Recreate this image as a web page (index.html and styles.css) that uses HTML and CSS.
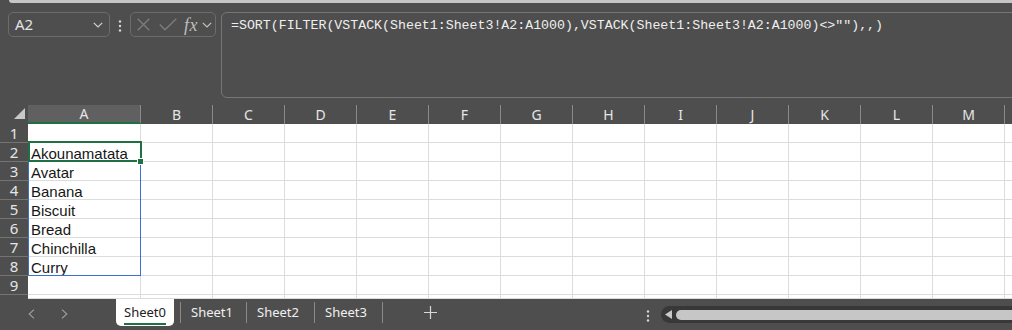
FILE: index.html
```html
<!DOCTYPE html>
<html>
<head>
<meta charset="utf-8">
<title>Sheet</title>
<link rel="stylesheet" href="styles.css">
</head>
<body>
<div class="app">
  <div class="topstrip"></div>
  <div class="fbar">
    <div class="namebox">
      <span class="nb-text">A2</span>
      <svg class="chev" width="10" height="6" viewBox="0 0 10 6"><polyline points="0.8,0.8 5,5 9.2,0.8" fill="none" stroke="#d2d2d2" stroke-width="1.2"/></svg>
    </div>
    <svg class="kebab" width="4" height="12" viewBox="0 0 4 12"><circle cx="2" cy="1.5" r="1.2" fill="#d4d4d4"/><circle cx="2" cy="6" r="1.2" fill="#d4d4d4"/><circle cx="2" cy="10.5" r="1.2" fill="#d4d4d4"/></svg>
    <div class="fxbox">
      <svg class="ic-x" width="13" height="13" viewBox="0 0 13 13"><path d="M0.7 0.7 L12.3 12.3 M12.3 0.7 L0.7 12.3" stroke="#7e7e7e" stroke-width="1.3" fill="none"/></svg>
      <svg class="ic-ok" width="18" height="13" viewBox="0 0 18 13"><polyline points="0.7,6.5 6,11.8 17.3,0.7" fill="none" stroke="#7e7e7e" stroke-width="1.3"/></svg>
      <span class="fx">fx</span>
      <svg class="chev2" width="10" height="6" viewBox="0 0 10 6"><polyline points="0.8,0.8 5,5 9.2,0.8" fill="none" stroke="#c4c4c4" stroke-width="1.2"/></svg>
    </div>
    <div class="formula">=SORT(FILTER(VSTACK(Sheet1:Sheet3!A2:A1000),VSTACK(Sheet1:Sheet3!A2:A1000)&lt;&gt;""),,)</div>
  </div>

  <div class="gridwrap">
    <div class="grid">
      <div class="corner"><span class="tri"></span></div>
      <div class="ch sel">A</div><div class="ch">B</div><div class="ch">C</div><div class="ch">D</div><div class="ch">E</div><div class="ch">F</div><div class="ch">G</div><div class="ch">H</div><div class="ch">I</div><div class="ch">J</div><div class="ch">K</div><div class="ch">L</div><div class="ch">M</div><div class="ch"></div>

      <div class="rh">1</div><div class="c"></div><div class="c"></div><div class="c"></div><div class="c"></div><div class="c"></div><div class="c"></div><div class="c"></div><div class="c"></div><div class="c"></div><div class="c"></div><div class="c"></div><div class="c"></div><div class="c"></div><div class="c"></div>
      <div class="rh">2</div><div class="c">Akounamatata</div><div class="c"></div><div class="c"></div><div class="c"></div><div class="c"></div><div class="c"></div><div class="c"></div><div class="c"></div><div class="c"></div><div class="c"></div><div class="c"></div><div class="c"></div><div class="c"></div><div class="c"></div>
      <div class="rh">3</div><div class="c">Avatar</div><div class="c"></div><div class="c"></div><div class="c"></div><div class="c"></div><div class="c"></div><div class="c"></div><div class="c"></div><div class="c"></div><div class="c"></div><div class="c"></div><div class="c"></div><div class="c"></div><div class="c"></div>
      <div class="rh">4</div><div class="c">Banana</div><div class="c"></div><div class="c"></div><div class="c"></div><div class="c"></div><div class="c"></div><div class="c"></div><div class="c"></div><div class="c"></div><div class="c"></div><div class="c"></div><div class="c"></div><div class="c"></div><div class="c"></div>
      <div class="rh">5</div><div class="c">Biscuit</div><div class="c"></div><div class="c"></div><div class="c"></div><div class="c"></div><div class="c"></div><div class="c"></div><div class="c"></div><div class="c"></div><div class="c"></div><div class="c"></div><div class="c"></div><div class="c"></div><div class="c"></div>
      <div class="rh">6</div><div class="c">Bread</div><div class="c"></div><div class="c"></div><div class="c"></div><div class="c"></div><div class="c"></div><div class="c"></div><div class="c"></div><div class="c"></div><div class="c"></div><div class="c"></div><div class="c"></div><div class="c"></div><div class="c"></div>
      <div class="rh">7</div><div class="c">Chinchilla</div><div class="c"></div><div class="c"></div><div class="c"></div><div class="c"></div><div class="c"></div><div class="c"></div><div class="c"></div><div class="c"></div><div class="c"></div><div class="c"></div><div class="c"></div><div class="c"></div><div class="c"></div>
      <div class="rh">8</div><div class="c">Curry</div><div class="c"></div><div class="c"></div><div class="c"></div><div class="c"></div><div class="c"></div><div class="c"></div><div class="c"></div><div class="c"></div><div class="c"></div><div class="c"></div><div class="c"></div><div class="c"></div><div class="c"></div>
      <div class="rh">9</div><div class="c"></div><div class="c"></div><div class="c"></div><div class="c"></div><div class="c"></div><div class="c"></div><div class="c"></div><div class="c"></div><div class="c"></div><div class="c"></div><div class="c"></div><div class="c"></div><div class="c"></div><div class="c"></div>
      <div class="rh last"></div><div class="c"></div><div class="c"></div><div class="c"></div><div class="c"></div><div class="c"></div><div class="c"></div><div class="c"></div><div class="c"></div><div class="c"></div><div class="c"></div><div class="c"></div><div class="c"></div><div class="c"></div><div class="c"></div>
    </div>
    <div class="spill"></div>
    <div class="active"></div>
    <div class="handle"></div>
  </div>

  <div class="tabbar">
    <div class="nav">
      <svg width="7" height="10" viewBox="0 0 7 10"><polyline points="6,0.6 1.2,5 6,9.4" fill="none" stroke="#9c9c9c" stroke-width="1.2"/></svg>
      <svg width="7" height="10" viewBox="0 0 7 10"><polyline points="1,0.6 5.8,5 1,9.4" fill="none" stroke="#9c9c9c" stroke-width="1.2"/></svg>
    </div>
    <div class="tab on"><span>Sheet0</span></div>
    <div class="sep"></div>
    <div class="tab t1">Sheet1</div>
    <div class="sep"></div>
    <div class="tab">Sheet2</div>
    <div class="sep"></div>
    <div class="tab">Sheet3</div>
    <div class="sep"></div>
    <svg class="plus" width="13" height="13" viewBox="0 0 13 13"><path d="M6.5 0 V13 M0 6.5 H13" stroke="#d8d8d8" stroke-width="1.2"/></svg>
    <svg class="dots2" width="4" height="12" viewBox="0 0 4 12"><circle cx="2" cy="1.5" r="1.2" fill="#d4d4d4"/><circle cx="2" cy="6" r="1.2" fill="#d4d4d4"/><circle cx="2" cy="10.5" r="1.2" fill="#d4d4d4"/></svg>
    <div class="track">
      <svg class="tarrow" width="7" height="9" viewBox="0 0 7 9"><polygon points="7,0 0,4.5 7,9" fill="#c8c8c8"/></svg>
      <div class="thumb"></div>
    </div>
  </div>
</div>
</body>
</html>
```
FILE: styles.css
```css
* { box-sizing: border-box; }
html, body { margin: 0; padding: 0; }
body { background: #4e4e4e; width: 1012px; height: 330px; overflow: hidden; font-family: "Noto Sans", "Liberation Sans", sans-serif; }
.app { width: 1012px; height: 330px; overflow: hidden; background: #4e4e4e; display: flex; flex-direction: column; }

.topstrip { height: 3px; margin-left: 9px; background: #c6c6c6; border-bottom-left-radius: 4px; flex: none; }

.fbar { display: flex; align-items: flex-start; padding: 9px 0 0 8px; height: 95px; flex: none; }
.namebox { width: 102px; height: 25px; border: 1px solid #6c6c6c; border-radius: 5px; display: flex; align-items: center; padding: 0 6px 0 6px; }
.nb-text { color: #e4e4e4; font-size: 15px; flex: 1; line-height: 23px; }
.kebab { margin: 8px 0 0 8px; flex: none; }
.fxbox { width: 86px; height: 25px; border: 1px solid #6c6c6c; border-radius: 5px; margin-left: 8px; display: flex; align-items: center; padding-left: 6px; }
.ic-ok { margin-left: 9px; }
.fx { font-family: "Liberation Serif", serif; font-style: italic; color: #bdbdbd; font-size: 18px; line-height: 20px; margin-left: 7px; letter-spacing: 0.5px; }
.chev2 { margin-left: 4px; }
.formula { flex: 1; height: 86px; margin-left: 5px; margin-right: -20px; border: 1px solid #767676; border-radius: 6px; padding: 4px 0 0 9px; color: #eeeeee; font-family: "Liberation Mono", monospace; font-size: 13.25px; line-height: 18px; white-space: nowrap; }

.gridwrap { position: relative; margin-top: 7px; height: 194px; flex: none; }
.grid { display: grid; grid-template-columns: 28px 113px repeat(13, 72px); grid-template-rows: 19px repeat(9, 19px) 4px; background: #ffffff; }
.corner { background: #4e4e4e; display: flex; justify-content: flex-end; align-items: flex-end; padding: 0 3px 5px 0; }
.tri { width: 0; height: 0; border-left: 11px solid transparent; border-bottom: 11px solid #c8c8c8; }
.ch { background: #4e4e4e; border-right: 1px solid #8a8a8a; color: #e6e6e6; font-size: 14px; line-height: 19px; text-align: center; }
.ch.sel { background: #606060; border-bottom: 2px solid #1f7145; line-height: 18px; }
.rh { background: #4e4e4e; border-bottom: 1px solid #747474; color: #e6e6e6; font-size: 15px; line-height: 18px; text-align: center; }
.rh.last { border-bottom: none; }
.c { border-right: 1px solid #dcdcdc; border-bottom: 1px solid #dcdcdc; font-family: "Liberation Sans", Arial, sans-serif; font-size: 15px; line-height: 18px; padding: 2px 0 0 3px; color: #161616; white-space: nowrap; overflow: visible; }

.spill { position: absolute; left: 28px; top: 36px; width: 113px; height: 135px; border: 1px solid #3d6fd0; }
.active { position: absolute; left: 28px; top: 36px; width: 114px; height: 21px; border: 2px solid #1f7145; }
.handle { position: absolute; left: 137px; top: 53px; width: 7px; height: 7px; background: #1f7145; border: 1px solid #ffffff; }

.tabbar { flex: 1; display: flex; align-items: flex-start; background: #4e4e4e; }
.nav { width: 116px; display: flex; gap: 26px; padding: 10px 0 0 28px; flex: none; }
.tab { height: 27px; line-height: 27px; font-size: 13px; color: #f0f0f0; width: 67px; padding-left: 10px; flex: none; }
.tab.t1 { width: 65px; }
.tab.on { width: 58px; background: #ffffff; color: #222222; border-radius: 0 0 5px 5px; padding-left: 8px; }
.tab.on span { display: inline-block; line-height: 22px; height: 25px; border-bottom: 2px solid #1f7145; padding-top: 1px; }
.sep { width: 1px; height: 21px; margin-top: 3px; background: #8a8a8a; flex: none; }
.tab.on + .sep { margin-left: 6px; }
.plus { margin: 7px 0 0 41px; flex: none; }
.dots2 { margin: 11px 0 0 209px; flex: none; }
.track { margin: 7px -40px 0 11px; height: 17px; flex: 1; background: #383838; border-radius: 9px 0 0 9px; display: flex; align-items: center; padding-left: 4px; }
.tarrow { flex: none; }
.thumb { flex: 1; height: 10px; margin-left: 4px; background: #c6c6c6; border-radius: 5px 0 0 5px; }
```
